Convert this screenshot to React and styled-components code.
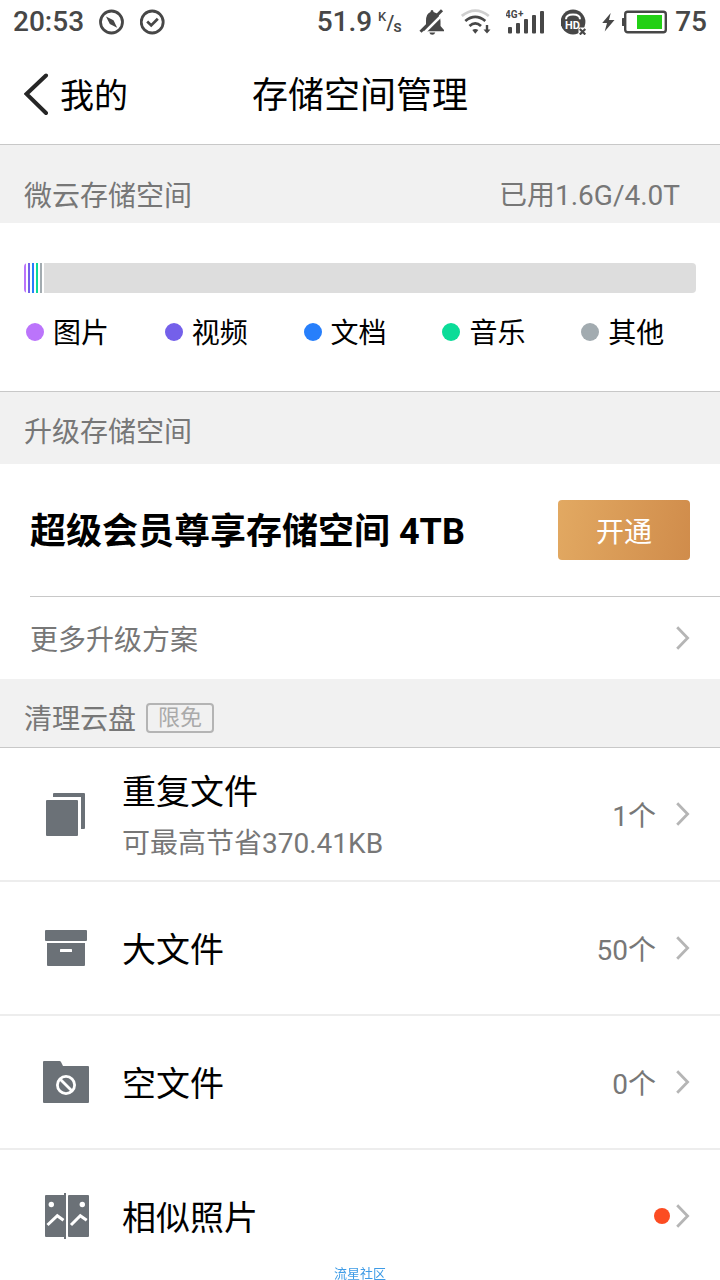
import styled, { createGlobalStyle } from "styled-components";

const legends = [
  { name: "图片", color: "#bb74fb" },
  { name: "视频", color: "#7460ea" },
  { name: "文档", color: "#277ffb" },
  { name: "音乐", color: "#0bdc98" },
  { name: "其他", color: "#a2abb0" },
];

const rows = [
  { title: "重复文件", note: "可最高节省370.41KB", count: "1个", icon: <CopyIcon /> },
  { title: "大文件", count: "50个", icon: <BoxIcon /> },
  { title: "空文件", count: "0个", icon: <FolderIcon /> },
  { title: "相似照片", unread: true, icon: <PhotoIcon /> },
];

export default function App() {
  return (
    <>
      <GlobalStyle />
      <StatusBar />
      <SHeader>
        <SBack href="#mine">
          <svg width="28" height="44" viewBox="0 0 28 44" fill="none" stroke="#262626" strokeWidth="4" strokeLinecap="round">
            <path d="M22 3.500L2.500 22L22 41" />
          </svg>
          <SBackText>我的</SBackText>
        </SBack>
        <STitle>存储空间管理</STitle>
      </SHeader>
      <main>
        <SSectionHead $pad="28px 40px 6px 24px">
          <SH2>微云存储空间</SH2>
          <SUsed>已用1.6G/4.0T</SUsed>
        </SSectionHead>
        <SUsage>
          <SBar>
            {legends.map((e) => <SSegment key={e.name} $color={e.color} />)}
            <SFree />
          </SBar>
          <SLegends>
            {legends.map((e) => (
              <SLegend key={e.name}>
                <SDot $color={e.color} $size={18} />
                <SLegendText>{e.name}</SLegendText>
              </SLegend>
            ))}
          </SLegends>
        </SUsage>

        <SSectionHead $pad="17px 24px 11px" $top>
          <SH2>升级存储空间</SH2>
        </SSectionHead>
        <SPlan>
          <SPlanName>超级会员尊享存储空间 4TB</SPlanName>
          <SOpenButton type="button">开通</SOpenButton>
        </SPlan>
        <SMore href="#plans">
          更多升级方案
          <Chevron />
        </SMore>

        <SSectionHead $pad="17px 24px 7px" $bottom>
          <SH2>清理云盘</SH2>
          <STag>限免</STag>
        </SSectionHead>
        <SList>
          {rows.map((e) => (
            <SItem key={e.title}>
              <SRow href="#clean">
                {e.icon}
                <SRowText $double={!!e.note}>
                  <SH3>{e.title}</SH3>
                  {e.note && <SNote>{e.note}</SNote>}
                </SRowText>
                {e.count && <SCount>{e.count}</SCount>}
                {e.unread && <SDot $color="#fc4c22" $size={16} />}
                <Chevron />
              </SRow>
            </SItem>
          ))}
        </SList>
      </main>
      <SMark>流星社区</SMark>
    </>
  );
}

function StatusBar() {
  return (
    <SStatus>
      <SStatusGroup>
        <span>20:53</span>
        <SStatusGroup>
          <svg width="26" height="26" viewBox="0 0 26 26">
            <circle cx="12.500" cy="13" r="11" fill="none" stroke="#474747" strokeWidth="2.8" />
            <path d="M7 7.500L14.500 11.200L18.200 18.800L10.800 15Z" fill="#474747" />
          </svg>
          <svg width="26" height="26" viewBox="0 0 26 26" fill="none" stroke="#474747" strokeWidth="2.8">
            <circle cx="12.200" cy="13" r="11" />
            <path d="M7.200 12.6L11.200 16.4L17.800 9.8" />
          </svg>
        </SStatusGroup>
      </SStatusGroup>
      <SStatusGroup>
        <SSpeed>
          <span>51.9</span>
          <svg width="25" height="26" viewBox="0 0 25 26" fill="#474747">
            <text x="0" y="11.500" fontSize="13" fontWeight="500">K</text>
            <text x="8.500" y="20.500" fontSize="20" fontWeight="500">/</text>
            <text x="15.500" y="23" fontSize="13" fontWeight="700">S</text>
          </svg>
        </SSpeed>
        <svg width="28" height="26" viewBox="0 0 28 26" fill="#474747">
          <path d="M14 .9Q15.500 1 15.500 3Q22.300 4.800 22.500 12V17L26 21V22.300H5.500V20.800L8 17.600V12Q8 4.500 12.500 3Q12.500 1 14 .9Z" />
          <path d="M11.300 23.400H17.300Q16.500 25.800 14.300 25.800Q12 25.800 11.300 23.400Z" />
          <path d="M3.500 26.500L26.500 3.500" stroke="#fff" strokeWidth="2.500" />
          <path d="M2.500 22.800L24 1.200" stroke="#474747" strokeWidth="3" />
        </svg>
        <svg width="30" height="26" viewBox="0 0 30 26" fill="none" strokeWidth="2.8">
          <path d="M.8 7Q14.300 -3.800 27.800 7" stroke="#cfcfcf" />
          <path d="M4.300 12Q14.300 3.800 24.300 12" stroke="#474747" />
          <path d="M8.500 17Q14.300 11.800 20 17" stroke="#474747" />
          <path d="M11.300 21Q14.300 18.800 17.300 21L14.300 24.800Z" fill="#474747" />
          <path d="M26 16V23" stroke="#474747" strokeWidth="2.400" />
          <path d="M22.500 20.600H29.500L26 24.600Z" fill="#474747" />
        </svg>
        <svg width="40" height="26" viewBox="0 0 40 26" fill="#474747">
          <text x="-1" y="9" fontSize="10" fontWeight="700">4G</text>
          <text x="12" y="8" fontSize="10" fontWeight="700">+</text>
          <rect x="2" y="18" width="4" height="6.500" rx="1" />
          <rect x="10" y="14" width="4" height="10.500" rx="1" />
          <rect x="18" y="10" width="4" height="14.500" rx="1" />
          <rect x="26" y="6" width="4" height="18.500" rx="1" />
          <rect x="34" y="2" width="4" height="22.500" rx="1" />
        </svg>
        <svg width="26" height="26" viewBox="0 0 26 26">
          <circle cx="12" cy="13" r="12.400" fill="#474747" />
          <path d="M5 10.200Q5 5.500 12 5.500Q19 5.500 19 10.200" fill="none" stroke="#fff" strokeWidth="2" />
          <path d="M17.500 18.500H26V26H17.500Z" fill="#fff" />
          <text x="4" y="19.500" fontSize="11" fontWeight="700" fill="#fff">HD</text>
          <path d="M18.800 20L24.300 25.500M24.300 20L18.800 25.500" stroke="#474747" strokeWidth="2.200" />
        </svg>
        <SBattery>
          <svg width="14" height="26" viewBox="0 0 14 26" fill="#474747">
            <path d="M8.700 4L.2 14H5L2.700 22.500L12.500 11H7Z" />
          </svg>
          <svg width="47" height="26" viewBox="0 0 47 26">
            <path d="M2 9H1Q-.5 9 -.5 10.500V15.500Q-.5 17 1 17H2Z" fill="#474747" />
            <rect x="3.200" y="2.700" width="40.600" height="20.600" rx="2.500" fill="none" stroke="#474747" strokeWidth="2.400" />
            <rect x="15" y="6" width="25" height="14" fill="#22d015" />
          </svg>
          <span>75</span>
        </SBattery>
      </SStatusGroup>
    </SStatus>
  );
}

function Chevron() {
  return (
    <SChevron width="14" height="24" viewBox="0 0 14 24">
      <path d="M1.200 1.200L11.600 12L1.200 22.800" />
    </SChevron>
  );
}

function CopyIcon() {
  return (
    <SIcon viewBox="0 0 48 48">
      <rect x="4" y="10" width="32" height="36" rx="1" />
      <path d="M12 3H42Q43 3 43 4V38Q43 39 42 39H39V7H11V4Q11 3 12 3Z" />
    </SIcon>
  );
}

function BoxIcon() {
  return (
    <SIcon viewBox="0 0 48 48">
      <rect x="3" y="6" width="42" height="11" rx="1" />
      <path d="M5 19H43V41Q43 42 42 42H6Q5 42 5 41Z" />
      <rect x="18" y="25" width="12" height="3" rx=".5" fill="#fff" />
    </SIcon>
  );
}

function FolderIcon() {
  return (
    <SIcon viewBox="0 0 48 48">
      <path d="M2 3H17.500Q18.500 3 19 4L21 8H46Q47 8 47 9V44Q47 45 46 45H2Q1 45 1 44V4Q1 3 2 3Z" />
      <g fill="none" stroke="#fff" strokeWidth="2.800">
        <circle cx="24" cy="27" r="8.600" />
        <path d="M18 21L30 33" />
      </g>
    </SIcon>
  );
}

function PhotoIcon() {
  return (
    <SIcon viewBox="0 0 48 48">
      <rect x="3" y="3" width="20" height="42" rx="1" />
      <rect x="22" y="1" width="2" height="46" />
      <rect x="26" y="3" width="21" height="42" rx="1" />
      <g fill="#fff">
        <circle cx="9.300" cy="12.500" r="2.700" />
        <circle cx="40.300" cy="12.500" r="2.700" />
      </g>
      <path d="M5.500 33L15.300 23.700L21.500 28.200M29 33L38.300 23.700L44.700 28.200" fill="none" stroke="#fff" strokeWidth="3" />
    </SIcon>
  );
}

const GlobalStyle = createGlobalStyle`
  * {
    box-sizing: border-box;
  }
  body {
    margin: 0;
    background: #fff;
    color: #000;
    font-family: Roboto, "Noto Sans CJK SC", sans-serif;
  }
  a {
    color: inherit;
    text-decoration: none;
  }
  svg {
    display: block;
    flex: none;
  }
  h1, h2, h3, p, ul {
    margin: 0;
    padding: 0;
    font-weight: 400;
  }
`

const SStatus = styled.div`
  display: flex;
  justify-content: space-between;
  align-items: center;
  height: 44px;
  padding: 0 13px;
  color: #474747;
  font-size: 28px;
  font-weight: 500;
  line-height: 32px;
`

const SStatusGroup = styled.div`
  display: flex;
  align-items: center;
  gap: 15px;
`

const SSpeed = styled.div`
  display: flex;
  align-items: center;
  gap: 6px;
`

const SBattery = styled(SSpeed)``

const SHeader = styled.header`
  display: grid;
  grid-template-columns: 1fr auto 1fr;
  align-items: center;
  height: 101px;
  padding: 0 24px;
  border-bottom: 1px solid #c8c8c8;
`

const SBack = styled.a`
  display: flex;
  align-items: center;
  gap: 8px;
  font-size: 34px;
  line-height: 48px;
`

const SBackText = styled.span`
  padding-top: 4px;
`

const STitle = styled.h1`
  padding-top: 4px;
  font-size: 36px;
  line-height: 48px;
`

const SSectionHead = styled.div`
  display: flex;
  align-items: center;
  gap: 10px;
  padding: ${(p) => p.$pad};
  background: #f1f1f1;
  border-top: ${(p) => (p.$top ? "1px solid #c8c8c8" : "none")};
  border-bottom: ${(p) => (p.$bottom ? "1px solid #c8c8c8" : "none")};
  color: #777;
  font-size: 28px;
  line-height: 40px;
`

const SH2 = styled.h2`
  padding-top: 4px;
  font-size: 28px;
`

const SUsed = styled.span`
  margin-left: auto;
  padding-top: 2px;
`

const STag = styled.span`
  padding: 0 10px;
  border: 2px solid #b4b4b4;
  border-radius: 4px;
  color: #aaa;
  font-size: 22px;
  line-height: 26px;
`

const SUsage = styled.section`
  padding: 40px 0 37px;
`

const SBar = styled.div`
  display: flex;
  gap: 2px;
  height: 30px;
  margin: 0 24px;
  border-radius: 4px;
  overflow: hidden;
`

const SSegment = styled.span`
  width: 2px;
  background: ${(p) => p.$color};
`

const SFree = styled.span`
  flex: 1;
  background: #ddd;
`

const SLegends = styled.ul`
  display: grid;
  grid-template-columns: repeat(5, 1fr);
  padding: 17px 0 0 26px;
  list-style: none;
`

const SLegend = styled.li`
  display: flex;
  align-items: center;
  gap: 9px;
  font-size: 28px;
  line-height: 40px;
`

const SLegendText = styled.span`
  padding-top: 4px;
`

const SDot = styled.span`
  flex: none;
  width: ${(p) => p.$size}px;
  height: ${(p) => p.$size}px;
  border-radius: 50%;
  background: ${(p) => p.$color};
`

const SPlan = styled.section`
  display: flex;
  justify-content: space-between;
  align-items: center;
  margin-left: 30px;
  padding: 36px 30px 36px 0;
  border-bottom: 1px solid #c8c8c8;
`

const SPlanName = styled.h3`
  padding-top: 4px;
  font-size: 36px;
  font-weight: 700;
  line-height: 48px;
`

const SOpenButton = styled.button`
  width: 132px;
  height: 60px;
  padding: 0;
  border: 0;
  border-radius: 4px;
  background: linear-gradient(100deg, #e2a962, #d08c4b);
  color: #fff;
  font-family: inherit;
  font-size: 28px;
`

const SMore = styled.a`
  display: flex;
  justify-content: space-between;
  align-items: center;
  height: 82px;
  padding: 0 30px;
  color: #777;
  font-size: 28px;
`

const SChevron = styled.svg`
  fill: none;
  stroke: #b5b5b5;
  stroke-width: 2.8;
`

const SList = styled.ul`
  list-style: none;
`

const SItem = styled.li`
  border-bottom: 2px solid #ededed;
`

const SRow = styled.a`
  display: flex;
  align-items: center;
  height: 132px;
  padding: 0 30px 0 42px;

  ${SDot} {
    margin-right: 6px;
  }
`

const SIcon = styled.svg`
  width: 48px;
  height: 48px;
  margin-right: 32px;
  fill: #6b7177;
`

const SRowText = styled.div`
  flex: 1;
  padding-top: ${(p) => (p.$double ? 8 : 4)}px;
`

const SH3 = styled.h3`
  font-size: 34px;
  line-height: 52px;
`

const SNote = styled.p`
  color: #777;
  font-size: 28px;
  line-height: 52px;
`

const SCount = styled.span`
  margin-right: 20px;
  color: #777;
  font-size: 28px;
`

const SMark = styled.small`
  position: fixed;
  bottom: 0;
  left: 50%;
  transform: translateX(-50%);
  color: #3d9be6;
  font-size: 13px;
  line-height: 13px;
`
